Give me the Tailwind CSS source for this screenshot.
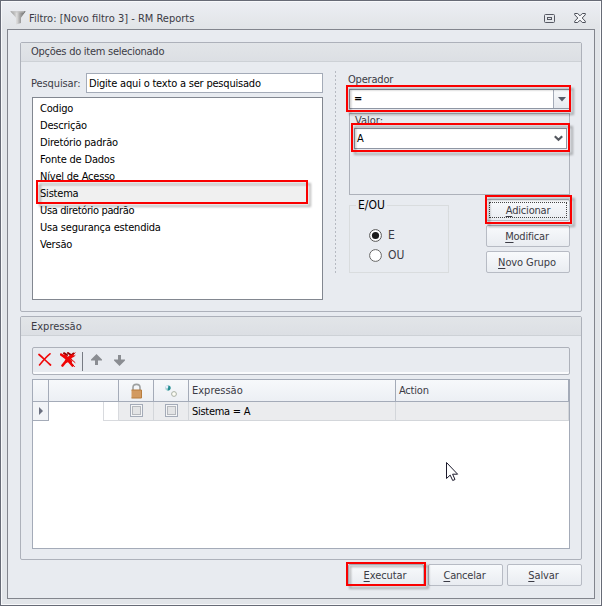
<!DOCTYPE html>
<html lang="pt-BR">
<head>
<meta charset="utf-8">
<title>Filtro: [Novo filtro 3] - RM Reports</title>
<script src="https://cdn.jsdelivr.net/npm/@tailwindcss/browser@4"></script>
</head>
<body class="overflow-hidden font-['DejaVu_Sans_Condensed','DejaVu_Sans',sans-serif] text-[11px] leading-[17px] tracking-[-0.2px] text-[#3b3b45] whitespace-nowrap">
<div class="relative flex h-[606px] w-[602px] flex-col border border-[#676b76] bg-[#e2e5e9] shadow-[inset_0_0_0_1px_#f8f9fb]">
  <header class="m-px mb-0 flex h-[27px] shrink-0 items-center bg-linear-to-b from-[#eceef3] to-[#e1e4e7] pt-[5px] pr-[14px] pl-[8px]">
    <svg class="mt-[-1px]" width="16" height="14" viewBox="0 0 16 14"><defs><linearGradient id="f"><stop stop-color="#8a8a8a"/><stop offset=".42" stop-color="#dedede"/><stop offset=".62" stop-color="#a8a8a8"/><stop offset="1" stop-color="#5f5f5f"/></linearGradient></defs><path d="M.3.3h15.400L11 6.800V12l-5 1.500V6.800z" fill="url(#f)"/><path d="M1.500.9h12.500" stroke="#c4c4c4"/></svg>
    <span class="ml-[3px] tracking-normal">Filtro: [Novo filtro 3] - RM Reports</span>
    <svg class="ml-auto" width="11" height="9" viewBox="0 0 11 9" fill="none" stroke="#555862"><rect x=".5" y=".5" width="10" height="8" rx="1"/><rect x="3.500" y="3.500" width="4" height="2"/></svg>
    <svg class="ml-[19px]" width="12" height="10" viewBox="0 0 12 10"><path d="M.7.500h3L6 2.800 8.300.500h3v1.300L8.200 5l3.100 3.200v1.300h-3L6 7.200 3.700 9.500h-3V8.200L3.800 5 .7 1.800z" fill="#f5f6f8" stroke="#4b4e58"/></svg>
  </header>
  <main class="mx-[6px] h-[570px] border border-[#82858d] bg-[#e8ebf0] px-[12px] pt-[12px]">
    <section class="flex h-[270px] w-[562px] flex-col rounded-[2px] border border-[#adb1ba]">
      <h2 class="h-[19px] shrink-0 border-b border-[#cdd1d6] bg-linear-to-b from-[#e2e5e8] to-[#dcdfe4] pl-[10px] leading-[18px] tracking-[-0.26px]">Opções do item selecionado</h2>
      <div class="flex flex-1">
        <div class="w-[314px] pt-[11px] pl-[11px]">
          <div class="flex h-[20px] items-center">
            <label class="-ml-px w-[54px] tracking-[-0.1px]">Pesquisar:</label>
            <div class="ml-px h-[20px] w-[237px] border border-[#a4abb8] bg-white pl-[2px] leading-[19px] text-black">Digite aqui o texto a ser pesquisado</div>
          </div>
          <ul class="mt-[4px] h-[203px] w-[291px] border border-[#828790] bg-white pt-[2px] text-black">
            <li class="h-[17px] pl-[7px]">Codigo</li>
            <li class="h-[17px] pl-[7px]">Descrição</li>
            <li class="h-[17px] pl-[7px]">Diretório padrão</li>
            <li class="h-[17px] pl-[7px]">Fonte de Dados</li>
            <li class="h-[17px] pl-[7px]">Nível de Acesso</li>
            <li class="mr-[16px] ml-[4px] h-[17px] bg-[#f0f0f0] pl-[3px]">Sistema</li>
            <li class="h-[17px] pl-[7px] tracking-[-0.36px]">Usa diretório padrão</li>
            <li class="h-[17px] pl-[7px]">Usa segurança estendida</li>
            <li class="h-[17px] pl-[7px]">Versão</li>
          </ul>
        </div>
        <div class="mt-[9px] h-[202px] w-px bg-[repeating-linear-gradient(to_bottom,#b6bac2_0_2px,transparent_2px_4px)]"></div>
        <div class="ml-[13px] w-[221px] pt-[9px]">
          <div class="-ml-px h-[18px] leading-[18px]">Operador</div>
          <div class="flex h-[20px] border border-[#8f96a3] bg-white pl-[4px] leading-[18px] font-bold text-black">
            <span class="flex-1">=</span>
            <span class="flex w-[16px] items-center justify-center border-l border-[#a4abb8] bg-linear-to-b from-[#f7f9fb] to-[#e6e9ee]"><svg width="8" height="5" viewBox="0 0 8 5"><path d="M0 0h8L4 4.500z" fill="#555b68"/></svg></span>
          </div>
          <div class="mt-[4px] h-[82px] border border-[#adb1ba] px-[4px]">
            <div class="h-[14px] pl-px leading-[14px] tracking-normal">Valor:</div>
            <div class="flex h-[21px] w-[213px] items-center justify-between border border-[#8f96a3] bg-white pr-[3px] pl-[2px] text-black"><span>A</span><svg width="9" height="7" viewBox="0 0 9 7" fill="none" stroke="#55585f" stroke-width="2.200"><path d="m.8 1.200 3.700 3.600 3.700-3.600"/></svg></div>
          </div>
          <div class="flex justify-between">
            <fieldset class="mt-[2px] h-[76px] w-[100px] border border-[#d9dcde] px-[6px] text-[12px] leading-[16px] tracking-normal">
              <legend class="px-[2px] text-black">E/OU</legend>
              <label class="mt-[12px] ml-[13px] flex h-[20px] items-center gap-[6px]"><svg width="13" height="13" viewBox="0 0 13 13"><circle cx="6.500" cy="6.500" r="5.900" fill="#fff" stroke="#555"/><circle cx="6.500" cy="6.500" r="3.600" fill="#1b1b1b"/></svg>E</label>
              <label class="ml-[13px] flex h-[20px] items-center gap-[6px]"><svg width="13" height="13" viewBox="0 0 13 13"><circle cx="6.500" cy="6.500" r="5.900" fill="#fff" stroke="#666"/></svg>OU</label>
            </fieldset>
            <div class="mt-[4px] flex w-[84px] flex-col gap-[4px] text-center">
              <button class="h-[22px] rounded-[2px] border border-[#b7bbc4] bg-linear-to-b from-[#f8fafc] to-[#e9ecf1] p-[2px] tracking-[-0.2px]"><span class="flex h-full items-center justify-center border border-dotted border-[#444]"><span class="underline decoration-1 underline-offset-2">A</span>dicionar</span></button>
              <button class="h-[22px] rounded-[2px] border border-[#b7bbc4] bg-linear-to-b from-[#f8fafc] to-[#e9ecf1] pr-[2px] tracking-[-0.2px]"><span class="underline decoration-1 underline-offset-2">M</span>odificar</button>
              <button class="h-[22px] rounded-[2px] border border-[#b7bbc4] bg-linear-to-b from-[#f8fafc] to-[#e9ecf1] pr-[2px] tracking-[-0.1px]"><span class="underline decoration-1 underline-offset-2">N</span>ovo Grupo</button>
            </div>
          </div>
        </div>
      </div>
    </section>
    <section class="mt-[4px] h-[244px] w-[562px] rounded-[2px] border border-[#adb1ba]">
      <h2 class="h-[19px] border-b border-[#cdd1d6] bg-linear-to-b from-[#e2e5e8] to-[#dcdfe4] pl-[10px] leading-[19px] tracking-normal">Expressão</h2>
      <div class="mt-[11px] ml-[11px] flex h-[28px] w-[538px] items-start rounded-[2px] border border-[#adb1ba] pt-[4px] pl-[5px] shadow-[inset_0_-2px_0_#fafbfd]">
        <svg class="mt-px" width="14" height="13" viewBox="0 0 14 13" fill="none" stroke="#f00808" stroke-linecap="round"><path d="M1 1.500c3 2.500 6.500 6 11.500 10.500" stroke-width="1.700"/><path d="M12 .8C9 3 5.500 7 1.500 12" stroke-width="1.600"/></svg>
        <svg class="ml-[8px]" width="16" height="16" viewBox="0 0 16 16" fill="none" stroke="#f00505" stroke-linecap="round"><path d="M4 1.200 7 3M8 1l3 2M13.500 1.500 9.500 5" stroke="#960000" stroke-width="2"/><path d="M1 2.500 6 6l6.500 7.500M12.500 3.500 8 7l-5.500 6.500" stroke-width="2.600"/><path d="m4.500 4 6 5.500M11 4.500 6.500 9" stroke-width="3.400"/><path d="m11 7 4 3.500M10.500 10.500l4 4M15 .8l-1.500 1.500M13 5l2-1.500" stroke="#d00"/></svg>
        <span class="ml-[6px] h-[19px] w-px bg-[#777b83]"></span>
        <svg class="mt-[2px] ml-[8px]" width="11" height="12" viewBox="0 0 11 12"><path d="M5.500 0 11 5.500v1H7V11H4V6.500H0v-1z" fill="#8a8d92"/></svg>
        <svg class="mt-[3px] ml-[12px]" width="11" height="12" viewBox="0 0 11 12"><path d="M5.500 11 11 5.500v-1H7V0H4v4.500H0v1z" fill="#8a8d92"/></svg>
      </div>
      <div class="mt-[4px] ml-[11px] h-[170px] w-[538px] border border-[#a4abb8] bg-white">
        <div class="grid h-[22px] grid-cols-[16px_70px_35px_35px_207px_173px] border-b border-[#a4abb8] bg-linear-to-b from-[#f7f9fb] to-[#eceff4] leading-[21px]">
          <div class="border-r border-[#a4abb8]"></div>
          <div class="border-r border-[#a4abb8]"></div>
          <div class="flex items-center justify-center border-r border-[#a4abb8]"><svg width="11" height="16" viewBox="0 0 11 16"><path d="M2 8V4.500C2 .3 9 .3 9 4.500V8" fill="none" stroke="#9da0a0" stroke-width="1.600"/><path d="M.5 7h10v8H.5z" fill="#d29a61"/><path d="M.5 7h10M.5 15h10M10.500 7v8" stroke="#b77d3f"/></svg></div>
          <div class="flex items-center justify-center border-r border-[#a4abb8]"><svg width="12" height="12" viewBox="0 0 12 12"><circle cx="3" cy="3" r="2.700" fill="#a8d5d6"/><path d="M3.500.5a2.500 2.500 0 0 1-1 5z" fill="#258c92"/><circle cx="2" cy="2" r="1.200" fill="#eef"/><circle cx="9" cy="9" r="2.400" fill="#fcfcf5" stroke="#a9b0a4"/></svg></div>
          <div class="border-r border-[#a4abb8] pl-[3px] tracking-normal">Expressão</div>
          <div class="border-r border-[#a4abb8] pl-[3px]">Action</div>
        </div>
        <div class="grid h-[19px] grid-cols-[16px_70px_35px_35px_207px_173px] grid-rows-[19px] bg-[#ebecee] leading-[19px] text-black">
          <div class="flex items-center border-r border-b border-[#a4abb8] bg-[#f2f4f7] pl-[6px]"><svg width="4" height="8" viewBox="0 0 4 8"><path d="M0 0v8l4-4z" fill="#6b7080"/></svg></div>
          <div class="flex justify-end bg-white"><span class="w-[16px] border border-t-0 border-[#d8dade]"></span></div>
          <div class="flex items-start justify-center border-r border-b border-[#d3d6da] pt-[2px]"><span class="h-[13px] w-[13px] border border-[#a4abb8] bg-[#f4f5f6] p-px"><span class="block h-full border border-[#b5b8bd] bg-[#e3e4e5]"></span></span></div>
          <div class="flex items-start justify-center border-r border-b border-[#d3d6da] pt-[2px]"><span class="h-[13px] w-[13px] border border-[#a4abb8] bg-[#f4f5f6] p-px"><span class="block h-full border border-[#b5b8bd] bg-[#e3e4e5]"></span></span></div>
          <div class="border-r border-b border-[#d3d6da] pl-[3px] tracking-[-0.28px]">Sistema = A</div>
          <div class="border-r border-b border-[#d3d6da]"></div>
        </div>
      </div>
    </section>
    <footer class="mt-[4px] flex w-[562px] justify-end gap-[4px] text-center">
      <button class="h-[22px] w-[76px] rounded-[2px] border border-[#b7bbc4] bg-linear-to-b from-[#f8fafc] to-[#e9ecf1] pr-[2px] tracking-[-0.1px]"><span class="underline decoration-1 underline-offset-2">E</span>xecutar</button>
      <button class="h-[22px] w-[75px] rounded-[2px] border border-[#b7bbc4] bg-linear-to-b from-[#f8fafc] to-[#e9ecf1] pr-[2px] tracking-[-0.2px]"><span class="underline decoration-1 underline-offset-2">C</span>ancelar</button>
      <button class="h-[22px] w-[75px] rounded-[2px] border border-[#b7bbc4] bg-linear-to-b from-[#f8fafc] to-[#e9ecf1] pr-[2px] tracking-[-0.1px]"><span class="underline decoration-1 underline-offset-2">S</span>alvar</button>
    </footer>
  </main>
</div>
<!-- highlight frames -->
<div class="absolute top-[180px] left-[36px] h-[24px] w-[272px] border-2 border-[#fa0000] drop-shadow-[3px_3px_1px_rgba(0,0,0,0.28)]"></div>
<div class="absolute top-[85px] left-[346px] h-[27px] w-[225px] border-2 border-[#fa0000] drop-shadow-[3px_3px_1px_rgba(0,0,0,0.28)]"></div>
<div class="absolute top-[123px] left-[351px] h-[29px] w-[219px] border-2 border-[#fa0000] drop-shadow-[3px_3px_1px_rgba(0,0,0,0.28)]"></div>
<div class="absolute top-[195px] left-[485px] h-[29px] w-[87px] border-2 border-[#fa0000] drop-shadow-[3px_3px_1px_rgba(0,0,0,0.28)]"></div>
<div class="absolute top-[562px] left-[346px] h-[24px] w-[80px] border-2 border-[#fa0000] drop-shadow-[3px_3px_1px_rgba(0,0,0,0.28)]"></div>
<svg class="absolute top-[462px] left-[446px]" width="13" height="20" viewBox="0 0 13 20"><path d="M.5.500v16l3.700-3.400 2.500 5.400 2.300-1-2.400-5.300h5z" fill="#fff" stroke="#1c1a2c"/></svg>
</body>
</html>
